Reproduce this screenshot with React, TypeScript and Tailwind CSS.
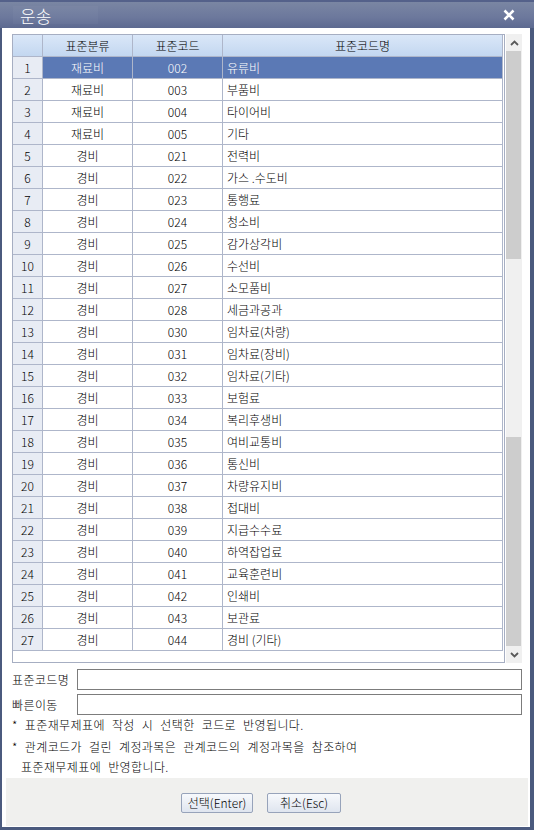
import React from "react";

const rows: [string, string, string][] = [
  ["재료비", "002", "유류비"],
  ["재료비", "003", "부품비"],
  ["재료비", "004", "타이어비"],
  ["재료비", "005", "기타"],
  ["경비", "021", "전력비"],
  ["경비", "022", "가스 .수도비"],
  ["경비", "023", "통행료"],
  ["경비", "024", "청소비"],
  ["경비", "025", "감가상각비"],
  ["경비", "026", "수선비"],
  ["경비", "027", "소모품비"],
  ["경비", "028", "세금과공과"],
  ["경비", "030", "임차료(차량)"],
  ["경비", "031", "임차료(장비)"],
  ["경비", "032", "임차료(기타)"],
  ["경비", "033", "보험료"],
  ["경비", "034", "복리후생비"],
  ["경비", "035", "여비교통비"],
  ["경비", "036", "통신비"],
  ["경비", "037", "차량유지비"],
  ["경비", "038", "접대비"],
  ["경비", "039", "지급수수료"],
  ["경비", "040", "하역잡업료"],
  ["경비", "041", "교육훈련비"],
  ["경비", "042", "인쇄비"],
  ["경비", "043", "보관료"],
  ["경비", "044", "경비 (기타)"],
];

function Chevron({ up }: { up: boolean }) {
  return (
    <svg width="9" height="6" viewBox="0 0 9 6">
      <polyline
        points={up ? "1,5 4.5,1.5 8,5" : "1,1 4.5,4.5 8,1"}
        fill="none"
        stroke="#5a5a5a"
        strokeWidth="1.8"
      />
    </svg>
  );
}

export default function App() {
  return (
    <div className="w-[534px] h-[830px] flex flex-col bg-[#4b5a7e] overflow-hidden font-['Noto_Sans_CJK_KR',sans-serif] font-light text-[12px] text-black">
      {/* Title bar */}
      <div className="h-[28px] shrink-0 flex items-center border-t-2 border-[#54618a] bg-[linear-gradient(to_bottom,#7a86a3,#6c789c_60%,#5c6990)]">
        <div className="ml-[13px] h-[18px] w-[85px] pl-[7px] flex items-center bg-[#ffffff08]">
          <span className="text-white text-[17px] leading-none">운송</span>
        </div>
        <svg className="ml-auto mr-[19px]" width="12" height="12" viewBox="0 0 12 12">
          <path d="M1.5 1.5 L10.5 10.5 M10.5 1.5 L1.5 10.5" stroke="#ffffff" strokeWidth="2.6" />
        </svg>
      </div>

      {/* Body */}
      <div className="flex-1 flex pl-[2px] pr-[4px] pb-[3px]">
        <div className="flex-1 bg-white flex flex-col pt-[6px] pb-[1px]">
          <div className="pl-[10px] pr-[8px] flex flex-col">
            {/* Grid + scrollbar */}
            <div className="flex h-[629px]">
              <div className="w-[493px] h-[629px] border border-[#a6aec2] bg-white">
                <div className="w-[490px]">
                  <div className="flex h-[22px] border-b border-[#aeb6ca] bg-[linear-gradient(to_bottom,#dae7f8,#c3d7f0)]">
                    <div className="w-[30px] border-r border-[#aeb6ca]" />
                    <div className="w-[90px] border-r border-[#aeb6ca] flex items-center justify-center leading-none">표준분류</div>
                    <div className="w-[90px] border-r border-[#aeb6ca] flex items-center justify-center leading-none">표준코드</div>
                    <div className="w-[280px] border-r border-[#aeb6ca] flex items-center justify-center leading-none">표준코드명</div>
                  </div>
                  {rows.map((r, i) => {
                    const sel = i === 0;
                    return (
                      <div key={i} className="flex h-[22px] border-b border-[#aeb6ca]">
                        <div className="w-[30px] border-r border-[#aeb6ca] bg-[#e8ecf4] flex items-center justify-center leading-none">
                          {i + 1}
                        </div>
                        <div
                          className={
                            sel
                              ? "w-[90px] border-r border-[#aeb6ca] bg-[#5b79b5] text-white flex items-center justify-center leading-none"
                              : "w-[90px] border-r border-[#aeb6ca] flex items-center justify-center leading-none"
                          }
                        >
                          {r[0]}
                        </div>
                        <div
                          className={
                            sel
                              ? "w-[90px] border-r border-[#aeb6ca] bg-[#5b79b5] text-white flex items-center justify-center leading-none"
                              : "w-[90px] border-r border-[#aeb6ca] flex items-center justify-center leading-none"
                          }
                        >
                          {r[1]}
                        </div>
                        <div
                          className={
                            sel
                              ? "w-[280px] border-r border-[#aeb6ca] bg-[#5b79b5] text-white flex items-center pl-[4px] leading-none whitespace-pre"
                              : "w-[280px] border-r border-[#aeb6ca] flex items-center pl-[4px] leading-none whitespace-pre"
                          }
                        >
                          {r[2]}
                        </div>
                      </div>
                    );
                  })}
                </div>
              </div>
              {/* Scrollbar */}
              <div className="ml-[1px] w-[16px] bg-[#f0f0f0] flex flex-col">
                <div className="h-[17px] flex items-center justify-center">
                  <Chevron up />
                </div>
                <div className="h-[208px] mr-[1px] bg-[#cdcdcd]" />
                <div className="h-[178px]" />
                <div className="h-[209px] mr-[1px] bg-[#cdcdcd]" />
                <div className="h-[17px] flex items-center justify-center">
                  <Chevron up={false} />
                </div>
              </div>
            </div>

            {/* Inputs */}
            <div className="mt-[6px] flex items-center h-[21px]">
              <div className="w-[65px] leading-none tracking-[0.4px]">표준코드명</div>
              <div className="flex-1 h-[21px] border border-[#7c7c7c] bg-white" />
            </div>
            <div className="mt-[4px] flex items-center h-[21px]">
              <div className="w-[65px] leading-none tracking-[0.4px]">빠른이동</div>
              <div className="flex-1 h-[21px] border border-[#7c7c7c] bg-white" />
            </div>

            {/* Notes */}
            <div className="[word-spacing:4px] tracking-[0.4px]">
              <div className="h-[20px] flex items-center leading-none">* 표준재무제표에 작성 시 선택한 코드로 반영됩니다.</div>
              <div className="mt-[2px] h-[20px] flex items-center leading-none">* 관계코드가 걸린 계정과목은 관계코드의 계정과목을 참조하여</div>
              <div className="h-[20px] flex items-center leading-none pl-[9px]">표준재무제표에 반영합니다.</div>
            </div>
          </div>

          {/* Footer */}
          <div className="mt-[1px] ml-[4px] mr-[2px] h-[48px] bg-[#f0f0ee] flex justify-center pr-[12px] pt-[15px] gap-[14px]">
            <button className="w-[72px] h-[20px] rounded-[2px] border border-[#97a3ba] bg-[linear-gradient(to_bottom,#f7f9fc,#dfe5ef)] flex items-center justify-center leading-none text-[12px] font-light">
              선택(Enter)
            </button>
            <button className="w-[74px] h-[20px] rounded-[2px] border border-[#97a3ba] bg-[linear-gradient(to_bottom,#f7f9fc,#dfe5ef)] flex items-center justify-center leading-none text-[12px] font-light">
              취소(Esc)
            </button>
          </div>
        </div>
      </div>
    </div>
  );
}
